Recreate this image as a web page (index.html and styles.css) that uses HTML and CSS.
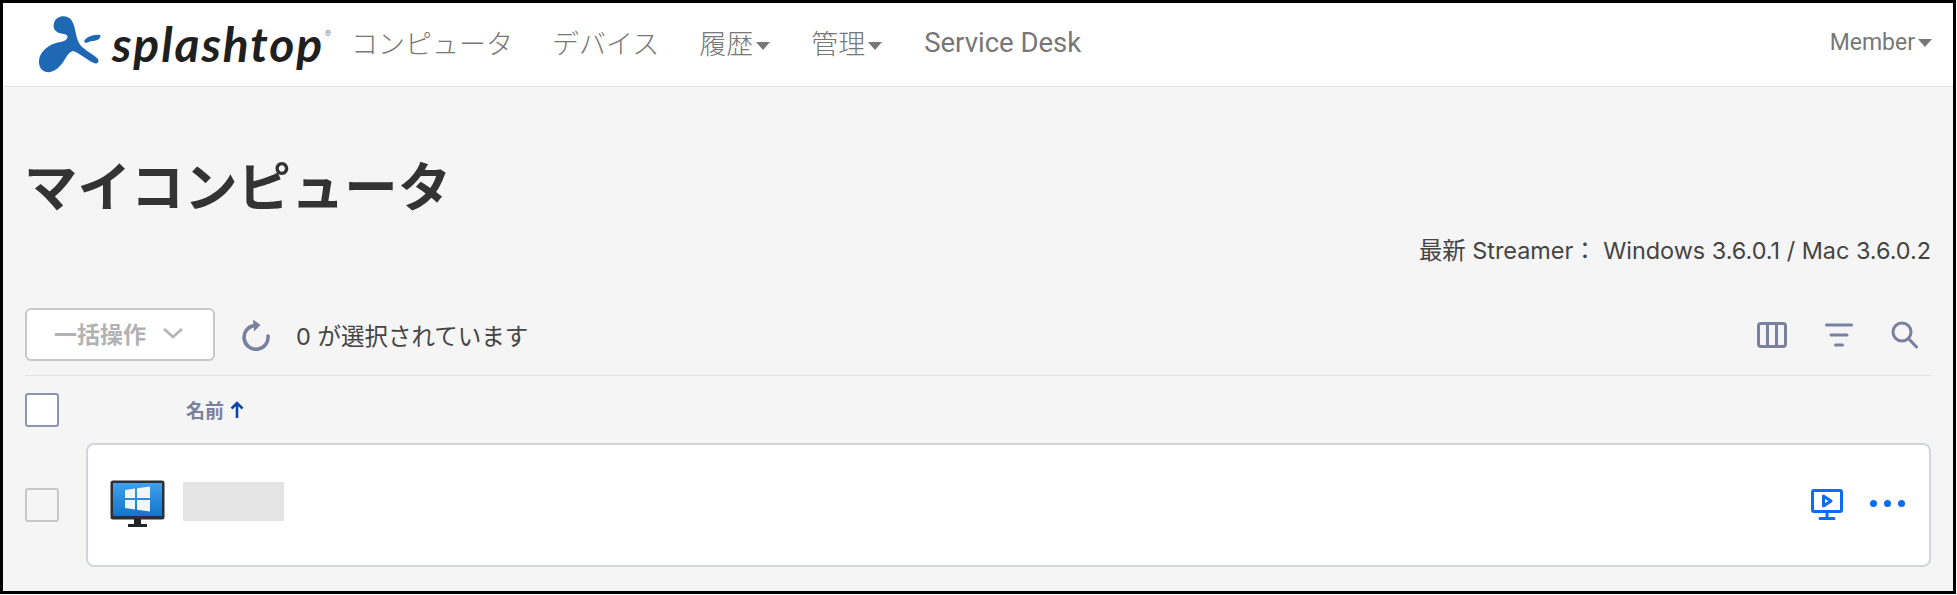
FILE: index.html
```html
<!DOCTYPE html>
<html lang="ja">
<head>
  <meta charset="UTF-8">
  <title>マイコンピュータ</title>
  <link rel="stylesheet" href="styles.css">
</head>
<body>
  <div class="frame">
    <header class="top-nav">
      <div class="brand">
        <svg class="brand-mark" viewBox="38 14 66 59" width="66" height="59">
          <path fill="#1f69b4" d="M54 22C56 14 68 13 72 20C76 27 75 34 79 42C82 48 92 52 97 57C100 60 98 64 94 62C88 60 80 52 73 50C66 52 66 60 58 67C50 74 40 72 39 62C38 52 48 43 60 41C68 40 70 34 64 33C58 32 52 30 54 22Z"/>
          <path fill="#1f69b4" d="M84 41C85 36 94 33 100 34C102 36 98 40 93 40C89 40 87 43 84 41Z"/>
        </svg>
        <span class="brand-name">splashtop</span>
        <span class="brand-reg">®</span>
      </div>
      <nav class="nav-links">
        <a class="nav-first">コンピュータ</a>
        <a class="nav-second">デバイス</a>
        <a class="has-caret">履歴</a>
        <a class="has-caret">管理</a>
        <a class="nav-latin">Service Desk</a>
      </nav>
      <a class="member has-caret">Member</a>
    </header>

    <main class="content">
      <h1>マイコンピュータ</h1>
      <p class="streamer">最新 Streamer： Windows 3.6.0.1 / Mac 3.6.0.2</p>

      <div class="toolbar">
        <button class="bulk-btn" type="button">
          一括操作
          <svg width="22" height="12" viewBox="0 0 22 12"><path d="M2 2l9 8 9-8" fill="none" stroke="#b4b4b4" stroke-width="2.8"/></svg>
        </button>
        <svg class="refresh" width="28" height="32" viewBox="0 0 28 32">
          <path d="M26 17A12 12 0 1 1 12 6.500" fill="none" stroke="#7a819f" stroke-width="3.6" stroke-linecap="round"/>
          <path d="M11 0.500L18.500 6 12 12.500z" fill="#7a819f"/>
        </svg>
        <span class="selected-count">0 が選択されています</span>
        <div class="toolbar-icons">
          <svg width="30" height="26" viewBox="0 0 30 26" fill="none" stroke="#7a819f" stroke-width="3">
            <rect x="1.500" y="1.500" width="27" height="23" rx="2.500"/>
            <path d="M10.500 2v22M19.500 2v22"/>
          </svg>
          <svg width="28" height="26" viewBox="0 0 28 26" fill="none" stroke="#7a819f" stroke-width="3" stroke-linecap="round">
            <path d="M1.500 3h25M6 13h16M10.500 23h7"/>
          </svg>
          <svg width="27" height="28" viewBox="0 0 27 28" fill="none" stroke="#7a819f" stroke-width="3" stroke-linecap="round">
            <circle cx="11" cy="11" r="9"/>
            <path d="M18 18l7.500 8"/>
          </svg>
        </div>
      </div>

      <div class="table-head">
        <span class="check check-head"></span>
        <span class="col-name">名前 <b class="sort-arrow">
          <svg width="14" height="17" viewBox="0 0 14 17" fill="none" stroke="#0a46b0" stroke-width="2.600"><path d="M7 17V2M1.500 7.500L7 2l5.500 5.500"/></svg>
        </b></span>
      </div>

      <div class="row">
        <span class="check check-row"></span>
        <div class="card">
          <svg class="monitor" width="55" height="48" viewBox="0 0 55 48">
            <defs>
              <linearGradient id="screenFill" x1="0" y1="0" x2="0" y2="1">
                <stop offset="0" stop-color="#3fa2ec"/>
                <stop offset="1" stop-color="#1274cc"/>
              </linearGradient>
            </defs>
            <rect x="0.500" y="0.500" width="54" height="39" rx="2.500" fill="#2a3036"/>
            <rect x="3" y="3" width="49" height="33" fill="url(#screenFill)"/>
            <path d="M24 44V39h7v5zM18 44h19v3H18z" fill="#20252a"/>
            <path fill="#f2f5f7" d="M15 10l10-1.500V18H15zM27 8.200L40 6.500V18H27zM15 20h10v9.500L15 28zM27 20h13v11.500l-13-1.800z"/>
          </svg>
          <div class="name-mask"></div>
          <div class="card-actions">
            <svg width="32" height="32" viewBox="0 0 32 32" fill="none" stroke="#0a6cf0" stroke-width="3">
              <rect x="1.500" y="1.500" width="29" height="21" rx="1.500"/>
              <path d="M12.500 7l7.500 5-7.500 5z" stroke-linejoin="round"/>
              <path d="M16 23v6M9 29.500h14" stroke-linecap="round"/>
            </svg>
            <div class="dots"><i></i><i></i><i></i></div>
          </div>
        </div>
      </div>
    </main>
  </div>
</body>
</html>
```

FILE: styles.css
```css
/* Base */
html {
  background: #fff;
}

body {
  margin: 0;
  font-family: Inter, "Noto Sans CJK JP", sans-serif;
  color: #444;
}

.frame {
  box-sizing: border-box;
  width: 1956px;
  height: 594px;
  border: 3px solid #000;
  background: #f5f5f5;
  overflow: hidden;
}

/* Top navigation */
.top-nav {
  display: flex;
  align-items: center;
  height: 78px;
  padding: 0 21px 5px 35px;
  background: #fff;
  border-bottom: 1px solid #e4e4e4;
}

.brand {
  display: flex;
  align-items: center;
  width: 313px;
  flex-shrink: 0;
}

.brand-mark {
  flex-shrink: 0;
  margin-top: 5px;
}

.brand-name {
  margin: 3px 0 0 8px;
  font-family: Lato, sans-serif;
  font-style: italic;
  font-weight: 700;
  font-size: 48px;
  line-height: 1;
  letter-spacing: 1.900px;
  color: #1f1f1f;
}

.brand-reg {
  align-self: flex-start;
  margin: 18px 0 0 1px;
  font-size: 9px;
  color: #888;
}

.nav-links {
  display: flex;
  align-items: center;
  gap: 41px;
}

.nav-links a,
.member {
  font-family: Roboto, "Noto Sans CJK JP", sans-serif;
  font-size: 27px;
  font-weight: 300;
  color: #777;
}

.nav-links .nav-first {
  margin-right: -2px;
}

.nav-links .nav-second {
  margin-right: -1px;
}

.nav-links .nav-latin {
  margin-left: 1px;
  font-size: 27.500px;
  font-weight: 400;
}

.member {
  margin-left: auto;
  font-size: 23px;
  font-weight: 400;
}

.has-caret::after {
  content: "";
  display: inline-block;
  margin-left: 3px;
  vertical-align: middle;
  border-top: 8px solid #777;
  border-left: 7px solid transparent;
  border-right: 7px solid transparent;
}

/* Page content */
.content {
  padding: 0 22px;
}

h1 {
  margin: 0 0 0 -1px;
  padding-top: 66px;
  font-size: 53.400px;
  line-height: 70px;
  font-weight: 700;
  color: #333;
}

.streamer {
  margin: 13px 0 0;
  text-align: right;
  font-size: 23.400px;
  line-height: 30px;
}

/* Toolbar */
.toolbar {
  display: flex;
  align-items: center;
  height: 72px;
  margin-top: 38px;
  padding-bottom: 10px;
  box-sizing: border-box;
  border-bottom: 1px solid #e2e4e8;
}

.bulk-btn {
  display: flex;
  align-items: center;
  justify-content: center;
  gap: 16px;
  box-sizing: border-box;
  width: 190px;
  height: 53px;
  padding: 0 2px 3px 0;
  background: #fff;
  border: 2px solid #c8c8c8;
  border-radius: 6px;
  font-family: inherit;
  font-size: 23px;
  font-weight: 700;
  color: #b2b2b2;
}

.refresh {
  margin-left: 27px;
}

.selected-count {
  margin-left: 26px;
  font-size: 23.500px;
}

.toolbar-icons {
  display: flex;
  align-items: center;
  gap: 38px;
  margin-left: auto;
  margin-right: 13px;
}

/* Table */
.check {
  display: block;
  box-sizing: border-box;
  width: 34px;
  height: 34px;
  border-radius: 3px;
  flex-shrink: 0;
}

.check-head {
  background: #fff;
  border: 2px solid #8f93b3;
}

.check-row {
  background: #f5f5f5;
  border: 2px solid #c8c8c8;
}

.table-head {
  display: flex;
  align-items: center;
  height: 67px;
}

.col-name {
  display: flex;
  align-items: center;
  gap: 6px;
  margin-left: 127px;
  font-size: 19px;
  font-weight: 700;
  color: #7a819f;
}

.sort-arrow {
  display: flex;
}

.row {
  display: flex;
  align-items: center;
  gap: 27px;
}

.card {
  display: flex;
  align-items: center;
  box-sizing: border-box;
  width: 1845px;
  height: 124px;
  padding: 0 24px 0 22px;
  background: #fff;
  border: 2px solid #d2d6dc;
  border-radius: 8px;
}

.monitor {
  margin-top: -3px;
}

.name-mask {
  width: 101px;
  height: 39px;
  margin-left: 18px;
  margin-top: -7px;
  background: #e4e4e4;
}

.card-actions {
  display: flex;
  align-items: center;
  gap: 27px;
  margin-left: auto;
}

.dots {
  display: flex;
  gap: 7px;
  margin-top: -4px;
}

.dots i {
  display: block;
  width: 7px;
  height: 7px;
  border-radius: 50%;
  background: #0a6cf0;
}
```
